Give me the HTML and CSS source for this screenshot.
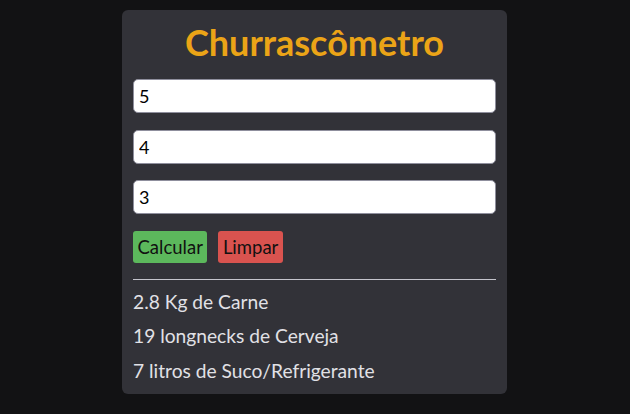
FILE: index.html
```html
<!DOCTYPE html>
<html lang="pt-BR">
<head>
<meta charset="utf-8">
<title>Churrascômetro</title>
<link rel="stylesheet" href="styles.css">
</head>
<body>
<main class="card">
  <h1 class="title">Churrascômetro</h1>
  <input class="field" type="text" value="5">
  <input class="field" type="text" value="4">
  <input class="field" type="text" value="3">
  <div class="actions">
    <button class="btn btn-green">Calcular</button>
    <button class="btn btn-red">Limpar</button>
  </div>
  <hr class="divider">
  <div class="results">
    <p class="line">2.8 Kg de Carne</p>
    <p class="line">19 longnecks de Cerveja</p>
    <p class="line">7 litros de Suco/Refrigerante</p>
  </div>
</main>
</body>
</html>
```
FILE: styles.css
```css
html, body {
  margin: 0;
  padding: 0;
  background: #121214;
  font-family: Lato, "Open Sans", sans-serif;
}
body {
  padding-top: 10px;
}
.card {
  box-sizing: border-box;
  width: 385px;
  margin: 0 0 0 122px;
  background: #323238;
  border-radius: 6px;
  padding: 12px 11px 6px;
  display: flex;
  flex-direction: column;
}
.title {
  margin: 0 0 17px;
  text-align: center;
  color: #eba417;
  font-size: 36px;
  font-weight: 700;
  line-height: 40px;
}
.field {
  box-sizing: border-box;
  height: 34px;
  width: 100%;
  margin: 0 0 16.5px;
  padding: 0 5px;
  border: 1px solid #8f8f9d;
  border-radius: 5px;
  background: #fff;
  color: #000;
  font-family: Lato, sans-serif;
  font-size: 18px;
  outline: none;
}
.actions {
  display: flex;
  gap: 11px;
  margin-bottom: 16px;
}
.btn {
  height: 32px;
  padding: 0 4.5px;
  border: none;
  border-radius: 3px;
  color: #111;
  font-family: Lato, sans-serif;
  font-size: 18.5px;
}
.btn-green { background: #5cb85c; }
.btn-red { background: #d9534f; }
.divider {
  margin: 0 0 5px;
  border: none;
  border-top: 1px solid #c4c4cc;
  height: 0;
}
.results {
  display: flex;
  flex-direction: column;
}
.line {
  margin: 0;
  color: #e1e1e6;
  font-size: 19.2px;
  line-height: 34.5px;
}
```
